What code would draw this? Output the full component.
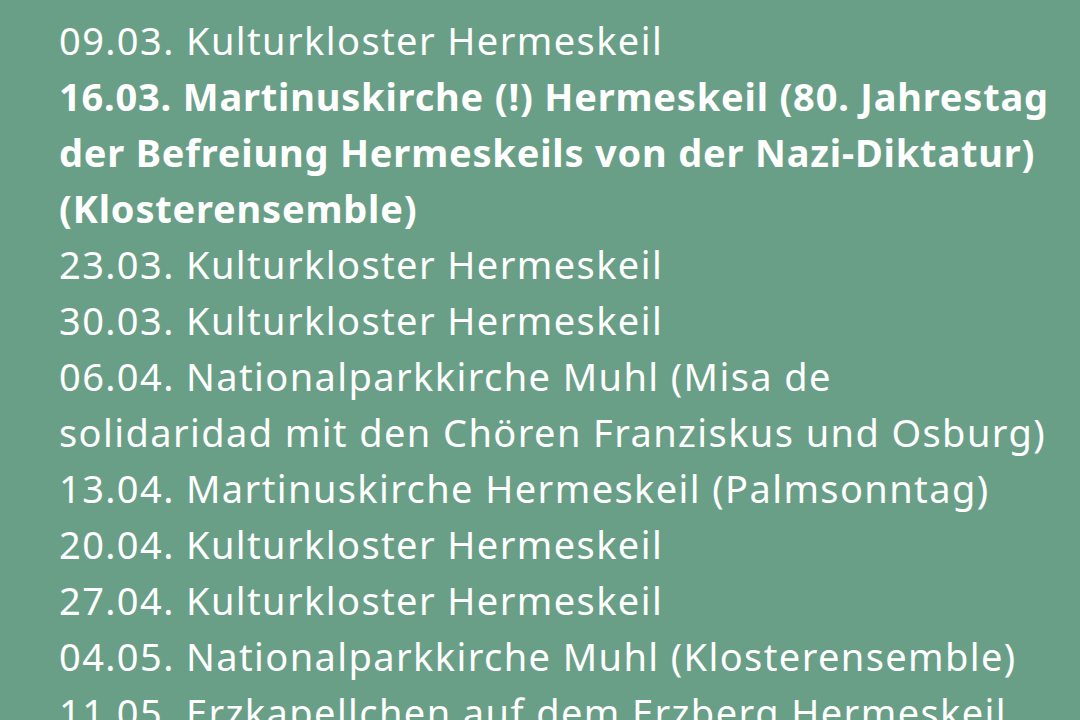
import React from 'react';

type Entry = { lines: string[]; bold?: boolean };

const entries: Entry[] = [
  { lines: ['09.03. Kulturkloster Hermeskeil'] },
  {
    lines: [
      '16.03. Martinuskirche (!) Hermeskeil (80. Jahrestag',
      'der Befreiung Hermeskeils von der Nazi-Diktatur)',
      '(Klosterensemble)',
    ],
    bold: true,
  },
  { lines: ['23.03. Kulturkloster Hermeskeil'] },
  { lines: ['30.03. Kulturkloster Hermeskeil'] },
  {
    lines: [
      '06.04. Nationalparkkirche Muhl (Misa de',
      'solidaridad mit den Chören Franziskus und Osburg)',
    ],
  },
  { lines: ['13.04. Martinuskirche Hermeskeil (Palmsonntag)'] },
  { lines: ['20.04. Kulturkloster Hermeskeil'] },
  { lines: ['27.04. Kulturkloster Hermeskeil'] },
  { lines: ['04.05. Nationalparkkirche Muhl (Klosterensemble)'] },
  { lines: ['11.05. Erzkapellchen auf dem Erzberg Hermeskeil'] },
];

export default function App() {
  return (
    <div className="h-[720px] w-[1080px] overflow-hidden bg-[#699f87]">
      <div
        className="pl-[59px] pt-[12px] text-[38px] leading-[56px] text-white"
        style={{ fontFamily: '"Noto Sans", "Open Sans", sans-serif' }}
      >
        {entries.map((entry, i) => (
          <p
            key={i}
            className={entry.bold ? 'font-bold tracking-[0.8px]' : 'font-normal tracking-[1.4px]'}
          >
            {entry.lines.map((line, j) => (
              <span key={j} className="block whitespace-nowrap">
                {line}
              </span>
            ))}
          </p>
        ))}
      </div>
    </div>
  );
}
